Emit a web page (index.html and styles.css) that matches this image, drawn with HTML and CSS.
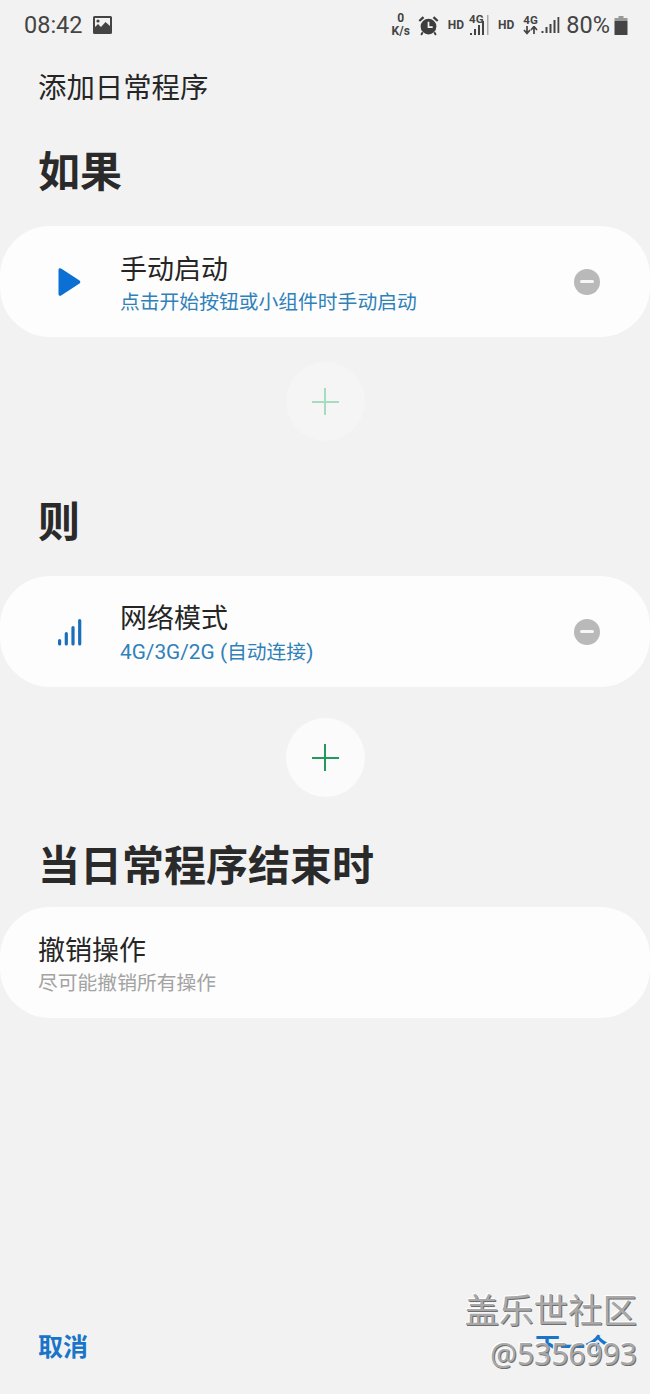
FILE: index.html
```html
<!DOCTYPE html>
<html lang="zh">

<head>
    <meta charset="UTF-8">
    <meta name="viewport" content="width=device-width, initial-scale=1.0">
    <title>添加日常程序</title>
    <link rel="stylesheet" href="styles.css">
</head>

<body>
    <!-- 状态栏 -->
    <div class="status-bar">
        <div class="status-left">
            <span class="clock">08:42</span>
            <svg class="pic-icon" viewBox="0 0 19 18" width="19" height="18">
                <path fill="#444" fill-rule="evenodd" d="M1.500 0h16A1.500 1.500 0 0 1 19 1.500v15a1.500 1.500 0 0 1-1.500 1.500h-16A1.500 1.500 0 0 1 0 16.500v-15A1.500 1.500 0 0 1 1.500 0zM2 2v9l3-3 3 3 4.500-5L17 10V2z" />
                <circle cx="5" cy="5" r="1.600" fill="#444" />
            </svg>
        </div>
        <div class="status-right">
            <span class="speed"><b>0</b><b>K/s</b></span>
            <svg class="alarm" viewBox="0 0 20 20" width="21" height="21">
                <circle cx="10" cy="11" r="7.500" fill="#3d3d3d" />
                <path d="M10 6.500V11.500H14" fill="none" stroke="#f2f2f2" stroke-width="1.600" />
                <path d="M0.500 5L4.500 1.200 6 2.800 2 6.500zM19.500 5L15.500 1.200 14 2.800 18 6.500z" fill="#3d3d3d" />
                <path d="M4.500 16.500L3 19M15.500 16.500L17 19" stroke="#3d3d3d" stroke-width="1.800" />
            </svg>
            <span class="hd hd-first">HD</span>
            <span class="net net-first">
                <span class="net-label">4G</span>
                <svg viewBox="0 0 21 22" width="21" height="22">
                    <path d="M1 19h2v2H1zM5 15h2v6H5zM9 11h2v10H9zM13 7h2v14h-2z" fill="#444" />
                    <path d="M18 1h1.500v20H18z" fill="#aaa" />
                </svg>
            </span>
            <span class="hd hd-second">HD</span>
            <span class="net">
                <span class="net-label">4G</span>
                <svg viewBox="0 0 15 9" width="15" height="9">
                    <path d="M4 0v6M1 4l3 3.500L7 4M11 8V2M8 4l3-3.500L14 4" fill="none" stroke="#444" stroke-width="1.700" />
                </svg>
            </span>
            <svg class="bars" viewBox="0 0 18 18" width="19" height="18">
                <path d="M0 15h2v2H0zM4 11h2v6H4zM8 8h2v9H8zM12 4h2v13h-2zM16 1h1.800v16H16z" fill="#444" />
            </svg>
            <span class="battery-text">80%</span>
            <svg class="battery" viewBox="0 0 13 19" width="14" height="19">
                <path d="M4 0h5v2H4z" fill="#999" />
                <path d="M0 2h13v3H0z" fill="#999" />
                <path d="M0 5h13v14H0z" fill="#444" />
            </svg>
        </div>
    </div>

    <main class="content">
        <div class="page-title">添加日常程序</div>

        <h2 class="section-title title-if">如果</h2>
        <div class="card">
            <div class="card-icon">
                <svg viewBox="0 0 24 30" width="24" height="30">
                    <path d="M1.500 3C1.500 1.200 3 .6 4.500 1.700L22.500 13.500c1.100.8 1.100 2.200 0 3L4.500 28.300C3 29.400 1.500 28.800 1.500 27z" fill="#0b6fd3" />
                </svg>
            </div>
            <div class="card-text">
                <div class="card-name">手动启动</div>
                <div class="card-desc">点击开始按钮或小组件时手动启动</div>
            </div>
            <span class="remove-btn"></span>
        </div>
        <div class="add-row">
            <span class="add-btn add-faded"></span>
        </div>

        <h2 class="section-title title-then">则</h2>
        <div class="card">
            <div class="card-icon">
                <svg viewBox="0 0 25 28" width="25" height="28">
                    <path d="M1 22.500a1.600 1.600 0 0 1 3.200 0V26a1.600 1.600 0 0 1-3.200 0zM7.700 15.500a1.600 1.600 0 0 1 3.200 0V26a1.600 1.600 0 0 1-3.200 0zM14.400 9.500a1.600 1.600 0 0 1 3.200 0V26a1.600 1.600 0 0 1-3.200 0zM21.100 2.500a1.600 1.600 0 0 1 3.200 0V26a1.600 1.600 0 0 1-3.200 0z" fill="#1a6fb8" />
                </svg>
            </div>
            <div class="card-text">
                <div class="card-name">网络模式</div>
                <div class="card-desc"><span class="desc-latin">4G/3G/2G (</span>自动连接<span class="desc-latin">)</span></div>
            </div>
            <span class="remove-btn"></span>
        </div>
        <div class="add-row add-row-second">
            <span class="add-btn"></span>
        </div>

        <h2 class="section-title title-end">当日常程序结束时</h2>
        <div class="card card-plain">
            <div class="card-text">
                <div class="card-name">撤销操作</div>
                <div class="card-desc desc-gray">尽可能撤销所有操作</div>
            </div>
        </div>
    </main>

    <footer class="bottom-bar">
        <span class="bottom-link">取消</span>
        <span class="bottom-link">下一个</span>
    </footer>

    <!-- 水印 -->
    <div class="watermark">
        <div class="wm-name">盖乐世社区</div>
        <div class="wm-id">@5356993</div>
    </div>
</body>

</html>
```

FILE: styles.css
```css
/* 页面基本样式 */
body {
    font-family: "Noto Sans CJK SC", "Noto Sans", sans-serif;
    background-color: #f2f2f2;
    color: #252525;
    margin: 0;
    padding: 0;
    height: 1394px;
    position: relative;
    overflow: hidden;
}

/* 状态栏 */
.status-bar {
    height: 50px;
    display: flex;
    justify-content: space-between;
    align-items: center;
    padding: 0 22px 0 24px;
    color: #444;
}

.status-left {
    display: flex;
    align-items: center;
    gap: 10px;
}

.clock {
    font-family: Roboto, sans-serif;
    font-size: 23.500px;
}

.status-right {
    display: flex;
    align-items: center;
    font-family: Roboto, sans-serif;
}

.speed {
    display: flex;
    flex-direction: column;
    align-items: center;
    font-size: 12px;
    line-height: 13px;
    margin-right: 8px;
}

.hd {
    font-size: 12px;
    font-weight: 700;
}

.hd-first {
    margin: 0 5px 0 9px;
}

.hd-second {
    margin: 0 9px 0 8px;
}

.net {
    display: flex;
    flex-direction: column;
    align-items: flex-start;
}

.net-first {
    width: 21px;
}

.net-label {
    font-size: 11.500px;
    font-weight: 700;
    line-height: 11px;
}

.net svg {
    display: block;
}

.net-first svg {
    margin-top: -11px;
}

.bars {
    margin-left: 3px;
}

.battery-text {
    font-size: 23.500px;
    margin-left: 6px;
}

.battery {
    margin-left: 4px;
}

/* 主内容 */
.page-title {
    font-size: 28.400px;
    line-height: 40px;
    padding: 16px 0 0 38px;
}

.section-title {
    font-size: 42px;
    line-height: 60px;
    font-weight: 700;
    color: #2a2a2a;
    margin: 0;
    padding-left: 38px;
}

.title-if {
    margin-top: 33px;
    margin-bottom: 27px;
}

.title-then {
    margin-top: 48px;
    margin-bottom: 27px;
}

.title-end {
    margin-top: 36px;
    margin-bottom: 14px;
}

.card {
    height: 111px;
    background-color: #fdfdfd;
    border-radius: 50px;
    display: flex;
    align-items: center;
    box-sizing: border-box;
    padding: 0 50px 0 0;
}

.card-plain {
    padding-left: 38px;
}

.card-icon {
    width: 120px;
    padding-left: 57px;
    box-sizing: border-box;
    display: flex;
}

.card-text {
    flex: 1;
}

.card-name {
    font-size: 27px;
    line-height: 38px;
}

.card-desc {
    font-family: Roboto, "Noto Sans CJK SC", sans-serif;
    font-size: 19.800px;
    line-height: 28px;
    padding-top: 2px;
    margin-bottom: -2px;
    color: #2f81b9;
}

.desc-latin {
    font-size: 20.800px;
}

.desc-gray {
    color: #a3a3a3;
}

.remove-btn {
    width: 26px;
    height: 26px;
    border-radius: 50%;
    background-color: #b9b9b9;
    position: relative;
}

.remove-btn::after {
    content: "";
    position: absolute;
    left: 6px;
    right: 6px;
    top: 11.500px;
    height: 3px;
    background-color: #f6f6f6;
    border-radius: 2px;
}

/* 添加按钮 */
.add-row {
    display: flex;
    justify-content: center;
    margin-top: 25px;
}

.add-row-second {
    margin-top: 31px;
}

.add-btn {
    width: 79px;
    height: 79px;
    border-radius: 50%;
    background-color: #fbfbfb;
    position: relative;
}

.add-btn::before,
.add-btn::after {
    content: "";
    position: absolute;
    background-color: #239a5c;
}

.add-btn::before {
    left: 26px;
    right: 26px;
    top: 38.500px;
    height: 2px;
}

.add-btn::after {
    top: 26px;
    bottom: 26px;
    left: 38.500px;
    width: 2px;
}

.add-faded {
    background-color: #f5f5f5;
}

.add-faded::before,
.add-faded::after {
    background-color: #a8dcc0;
}

/* 底部按钮 */
.bottom-bar {
    position: absolute;
    left: 38px;
    right: 40px;
    top: 1328px;
    display: flex;
    justify-content: space-between;
}

.bottom-link {
    font-size: 25px;
    line-height: 34px;
    font-weight: 700;
    color: #1a75c9;
}

/* 水印 */
.watermark {
    position: absolute;
    right: 13px;
    top: 1285px;
    text-align: right;
    color: #a8a8a8;
    text-shadow: 1px 1px 0 #6e6e6e, -1px -1px 0 #fff;
}

.wm-name {
    font-size: 34.500px;
    line-height: 46px;
    font-weight: 400;
}

.wm-id {
    font-family: "Noto Sans", sans-serif;
    font-size: 30px;
    line-height: 40px;
    margin-top: 3px;
}
```
